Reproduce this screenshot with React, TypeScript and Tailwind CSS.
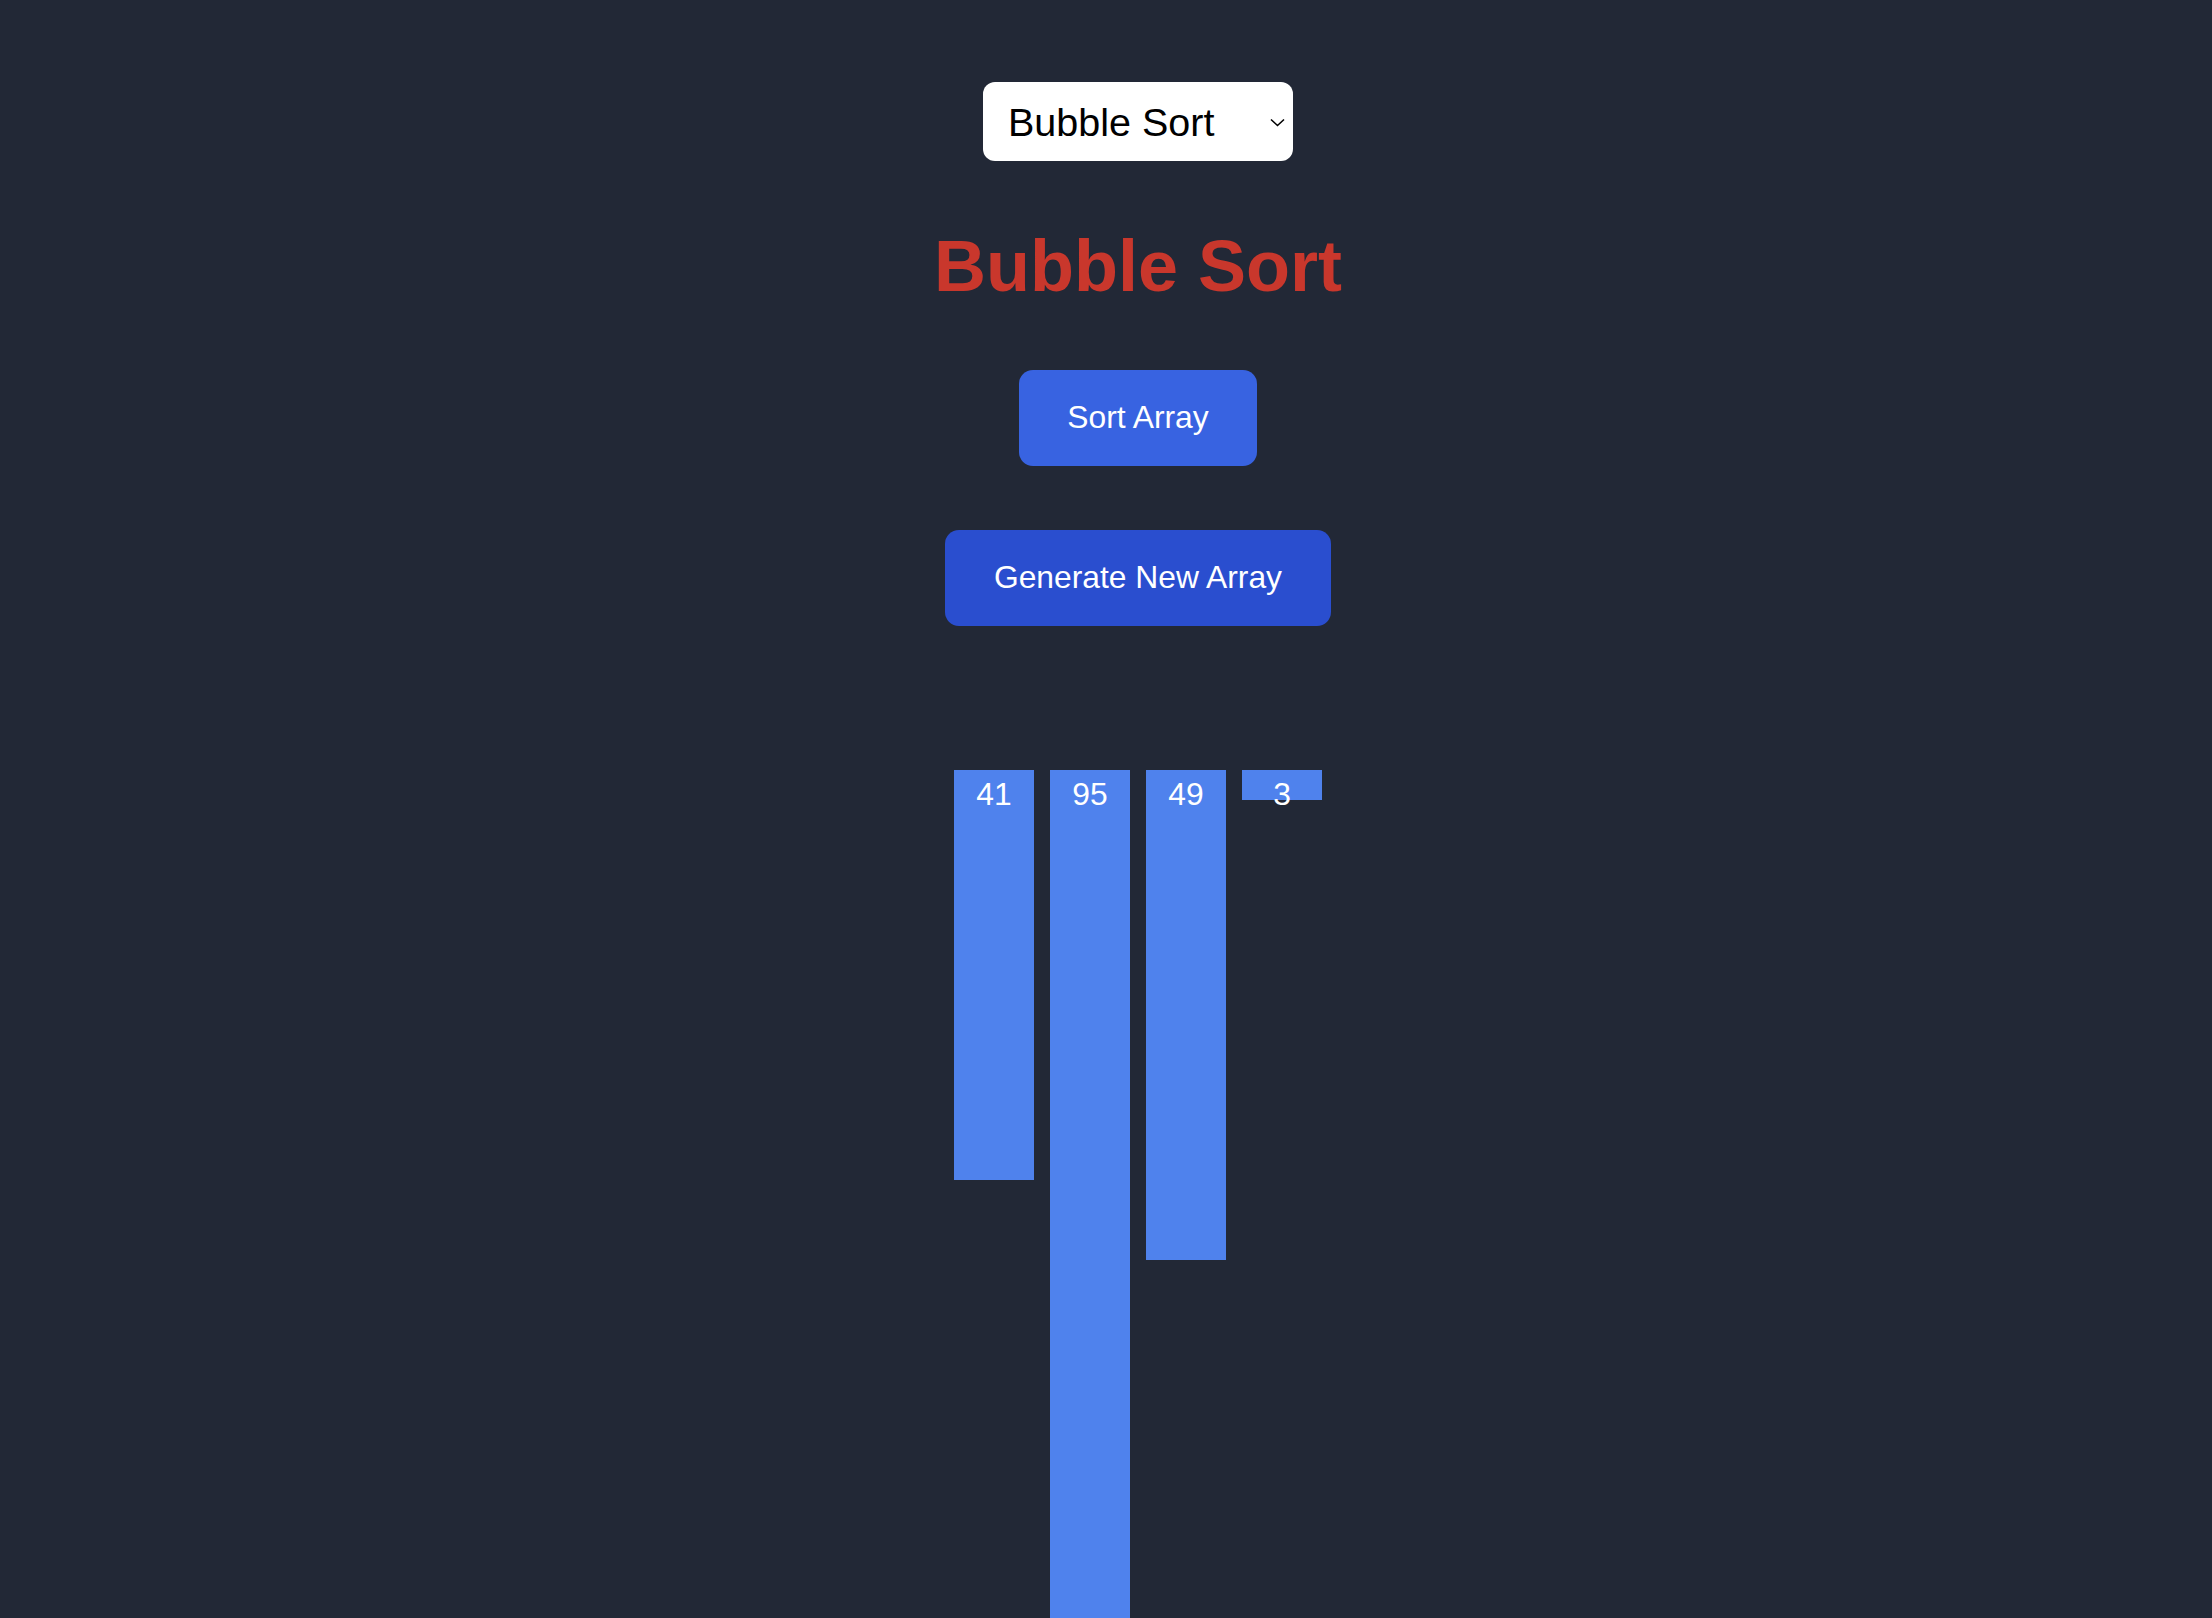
import { useState } from 'react';

const initialArray = [41, 95, 49, 3];

export default function App() {
  const [algorithm, setAlgorithm] = useState('Bubble Sort');
  const [array] = useState<number[]>(initialArray);

  return (
    <div
      className="min-h-screen w-full bg-[#222836] pl-16 pt-[82px] flex flex-col items-center"
      style={{ fontFamily: '"Liberation Sans", Arial, sans-serif' }}
    >
      {/* Algorithm picker */}
      <div className="relative">
        <select
          value={algorithm}
          onChange={(e) => setAlgorithm(e.target.value)}
          className="appearance-none bg-white text-black rounded-[12px] w-[310px] h-[79px] pl-[25px] pr-10 pt-[3px] text-[39.5px] outline-none"
          style={{ fontFamily: '"Liberation Sans", Arial, sans-serif' }}
        >
          <option>Bubble Sort</option>
          <option>Selection Sort</option>
          <option>Insertion Sort</option>
        </select>
        <svg
          className="absolute right-[7px] top-[35px] w-[17px] h-[11px] pointer-events-none"
          viewBox="0 0 17 11"
          fill="none"
          stroke="black"
          strokeWidth="1.6"
        >
          <path d="M2 2.5 L8.5 8.5 L15 2.5" />
        </svg>
      </div>

      <h1 className="mt-16 text-[72px] leading-[82px] font-bold text-[#c9372c]">{algorithm}</h1>

      <button className="mt-[63px] h-[96px] px-[48px] rounded-[14px] bg-[#3863e1] text-white text-[31.8px]">
        Sort Array
      </button>

      <button className="mt-16 h-[96px] px-[49px] rounded-[14px] bg-[#2a4ecf] text-white text-[31.8px]">
        Generate New Array
      </button>

      {/* Bars */}
      <div className="mt-[144px] flex items-start gap-4">
        {array.map((value, i) => (
          <div
            key={i}
            className="w-20 bg-[#4f82ed] flex justify-center"
            style={{ height: value * 10 }}
          >
            <span className="pt-[9px] text-[31.8px] leading-none text-white">{value}</span>
          </div>
        ))}
      </div>
    </div>
  );
}
